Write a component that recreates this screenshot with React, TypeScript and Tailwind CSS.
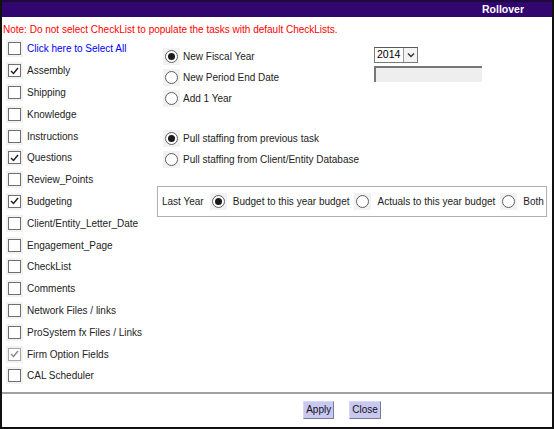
import React from "react";

const modules: { label: string; checked?: boolean; faded?: boolean }[] = [
  { label: "Assembly", checked: true },
  { label: "Shipping" },
  { label: "Knowledge" },
  { label: "Instructions" },
  { label: "Questions", checked: true },
  { label: "Review_Points" },
  { label: "Budgeting", checked: true },
  { label: "Client/Entity_Letter_Date" },
  { label: "Engagement_Page" },
  { label: "CheckList" },
  { label: "Comments" },
  { label: "Network Files / links" },
  { label: "ProSystem fx Files / Links" },
  { label: "Firm Option Fields", checked: true, faded: true },
  { label: "CAL Scheduler" },
];

function Check({ checked, faded }: { checked?: boolean; faded?: boolean }) {
  return (
    <span className="flex h-[17px] w-[17px] shrink-0 items-center justify-center bg-[#f2f2f2]">
      <span className={`flex h-[13px] w-[13px] items-center justify-center border bg-white ${faded ? "border-[#a8a8a8]" : "border-[#707070]"}`}>
        {checked && (
          <svg width="9" height="8" viewBox="0 0 9 8">
            <path d="M1 4 L3.5 6.5 L8 1" fill="none" stroke={faded ? "#8a8a8a" : "#222"} strokeWidth="1.5" />
          </svg>
        )}
      </span>
    </span>
  );
}

function Radio({ checked }: { checked?: boolean }) {
  return (
    <span className="flex h-[17px] w-[17px] shrink-0 items-center justify-center bg-[#f2f2f2]">
      <span className="flex h-[13px] w-[13px] items-center justify-center rounded-full border border-[#5f5f5f] bg-white">
        {checked && <span className="h-[7px] w-[7px] rounded-full bg-[#1a1a1a]" />}
      </span>
    </span>
  );
}

export default function App() {
  return (
    <div className="h-[429px] w-[555px] whitespace-nowrap bg-white text-[10px] text-[#222] [font-family:'Liberation_Sans',Arial,sans-serif]">
      <div className="flex h-full w-[554px] flex-col border-l-2 border-r-2 border-b-2 border-[#111]">
        {/* title bar */}
        <div className="flex h-[17px] items-center justify-end border-t-2 border-[#1c0a3c] bg-[#31066e] pr-[28px]">
          <span className="text-[10.5px] font-bold text-white">Rollover</span>
        </div>

        <div className="pl-px pt-[5px] text-[10px] text-[#ff0000]">
          Note: Do not select CheckList to populate the tasks with default CheckLists.
        </div>

        <div className="flex flex-1 pt-px">
          {/* module list */}
          <div className="flex w-[155px] flex-col pl-[4px]">
            <label className="flex h-[21.8px] items-center gap-[4px]">
              <Check />
              <span className="text-[#0000ee]">Click here to Select All</span>
            </label>
            {modules.map((m) => (
              <label key={m.label} className="flex h-[21.8px] items-center gap-[4px]">
                <Check checked={m.checked} faded={m.faded} />
                <span>{m.label}</span>
              </label>
            ))}
          </div>

          {/* options */}
          <div className="flex flex-1 flex-col pt-[8px]">
            <div className="flex">
              <div className="flex w-[217px] flex-col pl-[6px]">
                <label className="flex h-[21px] items-center gap-[3px]">
                  <Radio checked />
                  New Fiscal Year
                </label>
                <label className="flex h-[21px] items-center gap-[3px]">
                  <Radio />
                  New Period End Date
                </label>
                <label className="flex h-[21px] items-center gap-[3px]">
                  <Radio />
                  Add 1 Year
                </label>
              </div>
              <div className="flex flex-col gap-[3px] pt-[1px]">
                <div className="flex h-[16px] w-[44px] items-center border border-[#7a7a7a] border-t-[#5a5a5a] bg-white">
                  <span className="flex-1 pl-[2px] text-[10.5px] text-black">2014</span>
                  <span className="flex h-[14px] w-[14px] items-center justify-center border-l border-[#9a9a9a] bg-[#f3f3f3]">
                    <svg width="8" height="6" viewBox="0 0 8 6">
                      <path d="M1 1.5 L4 4.5 L7 1.5" fill="none" stroke="#333" strokeWidth="1.4" />
                    </svg>
                  </span>
                </div>
                <div className="h-[16px] w-[108px] border-t-2 border-l-2 border-[#777] bg-[#eeeeee]" />
              </div>
            </div>

            <div className="mt-[19px] flex flex-col pl-[6px]">
              <label className="flex h-[21px] items-center gap-[3px]">
                <Radio checked />
                Pull staffing from previous task
              </label>
              <label className="flex h-[21px] items-center gap-[3px]">
                <Radio />
                Pull staffing from Client/Entity Database
              </label>
            </div>

            <div className="mt-[16px] mr-[5px] flex h-[31px] items-center border border-[#b0b0b0] pl-[4px]">
              <span className="mr-[6px]">Last Year</span>
              <label className="flex items-center gap-[6px]">
                <Radio checked />
                Budget to this year budget
              </label>
              <label className="ml-[5px] flex items-center gap-[6px]">
                <Radio />
                Actuals to this year budget
              </label>
              <label className="ml-[5px] flex items-center gap-[6px]">
                <Radio />
                Both
              </label>
            </div>
          </div>
        </div>

        {/* footer */}
        <div className="flex h-[35px] items-center justify-center gap-[15px] border-t-2 border-[#a0a0a0] pb-[2px] pl-[130px]">
          <button className="h-[18px] border border-[#d8d8f4] border-b-[#7a7a90] border-r-[#7a7a90] bg-[#c8c8f2] px-[2px] text-[10px] text-[#111]">
            Apply
          </button>
          <button className="h-[18px] border border-[#d8d8f4] border-b-[#7a7a90] border-r-[#7a7a90] bg-[#c8c8f2] px-[2px] text-[10px] text-[#111]">
            Close
          </button>
        </div>
      </div>
    </div>
  );
}
